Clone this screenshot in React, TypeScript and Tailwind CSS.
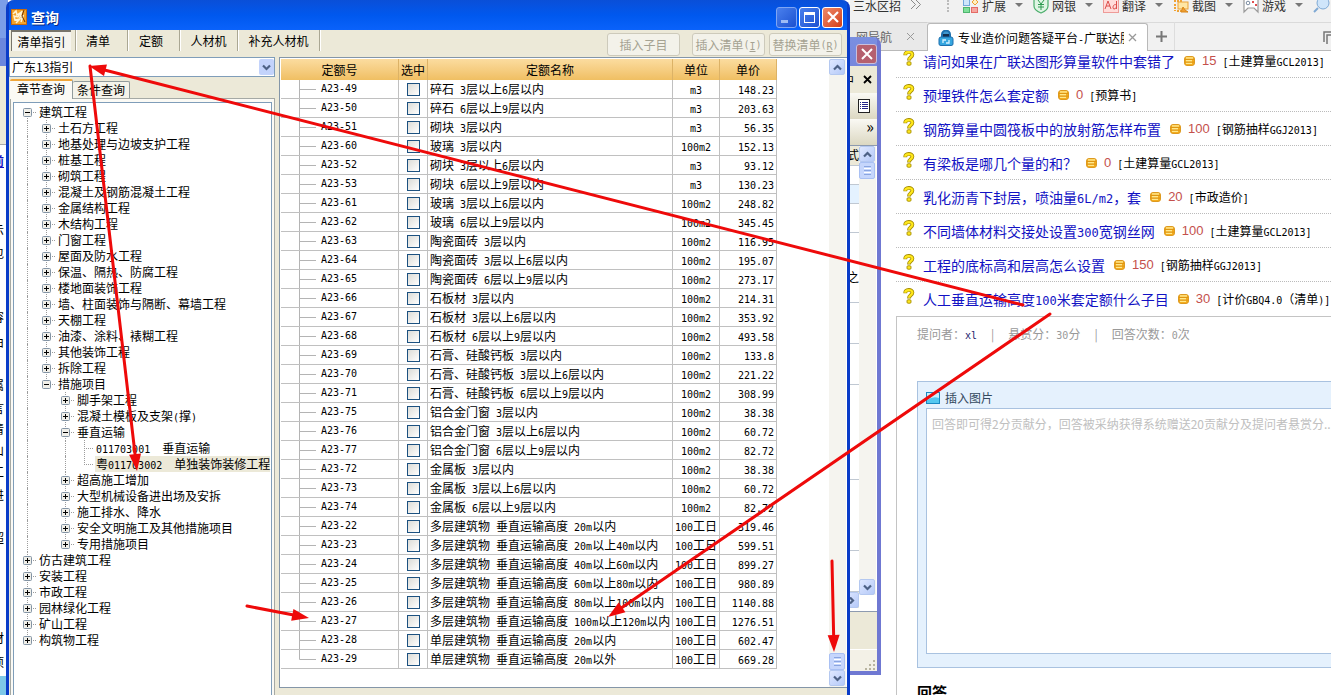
import React from "react";

const QUOTAS: [string, string, string, string][] = [
  ["A23-49", "碎石 3层以上6层以内", "m3", "148.23"],
  ["A23-50", "碎石 6层以上9层以内", "m3", "203.63"],
  ["A23-51", "砌块 3层以内", "m3", "56.35"],
  ["A23-60", "玻璃 3层以内", "100m2", "152.13"],
  ["A23-52", "砌块 3层以上6层以内", "m3", "93.12"],
  ["A23-53", "砌块 6层以上9层以内", "m3", "130.23"],
  ["A23-61", "玻璃 3层以上6层以内", "100m2", "248.82"],
  ["A23-62", "玻璃 6层以上9层以内", "100m2", "345.45"],
  ["A23-63", "陶瓷面砖 3层以内", "100m2", "116.95"],
  ["A23-64", "陶瓷面砖 3层以上6层以内", "100m2", "195.07"],
  ["A23-65", "陶瓷面砖 6层以上9层以内", "100m2", "273.17"],
  ["A23-66", "石板材 3层以内", "100m2", "214.31"],
  ["A23-67", "石板材 3层以上6层以内", "100m2", "353.92"],
  ["A23-68", "石板材 6层以上9层以内", "100m2", "493.58"],
  ["A23-69", "石膏、硅酸钙板 3层以内", "100m2", "133.8"],
  ["A23-70", "石膏、硅酸钙板 3层以上6层以内", "100m2", "221.22"],
  ["A23-71", "石膏、硅酸钙板 6层以上9层以内", "100m2", "308.99"],
  ["A23-75", "铝合金门窗 3层以内", "100m2", "38.38"],
  ["A23-76", "铝合金门窗 3层以上6层以内", "100m2", "60.72"],
  ["A23-77", "铝合金门窗 6层以上9层以内", "100m2", "82.72"],
  ["A23-72", "金属板 3层以内", "100m2", "38.38"],
  ["A23-73", "金属板 3层以上6层以内", "100m2", "60.72"],
  ["A23-74", "金属板 6层以上9层以内", "100m2", "82.72"],
  ["A23-22", "多层建筑物 垂直运输高度 20m以内", "100工日", "319.46"],
  ["A23-23", "多层建筑物 垂直运输高度 20m以上40m以内", "100工日", "599.51"],
  ["A23-24", "多层建筑物 垂直运输高度 40m以上60m以内", "100工日", "899.27"],
  ["A23-25", "多层建筑物 垂直运输高度 60m以上80m以内", "100工日", "980.89"],
  ["A23-26", "多层建筑物 垂直运输高度 80m以上100m以内", "100工日", "1140.88"],
  ["A23-27", "多层建筑物 垂直运输高度 100m以上120m以内", "100工日", "1276.51"],
  ["A23-28", "单层建筑物 垂直运输高度 20m以内", "100工日", "602.47"],
  ["A23-29", "单层建筑物 垂直运输高度 20m以外", "100工日", "669.28"],
];

type Kind = "plus" | "minus" | "leaf";
const TREE: [number, Kind, string][] = [
  [0, "minus", "建筑工程"],
  [1, "plus", "土石方工程"],
  [1, "plus", "地基处理与边坡支护工程"],
  [1, "plus", "桩基工程"],
  [1, "plus", "砌筑工程"],
  [1, "plus", "混凝土及钢筋混凝土工程"],
  [1, "plus", "金属结构工程"],
  [1, "plus", "木结构工程"],
  [1, "plus", "门窗工程"],
  [1, "plus", "屋面及防水工程"],
  [1, "plus", "保温、隔热、防腐工程"],
  [1, "plus", "楼地面装饰工程"],
  [1, "plus", "墙、柱面装饰与隔断、幕墙工程"],
  [1, "plus", "天棚工程"],
  [1, "plus", "油漆、涂料、裱糊工程"],
  [1, "plus", "其他装饰工程"],
  [1, "plus", "拆除工程"],
  [1, "minus", "措施项目"],
  [2, "plus", "脚手架工程"],
  [2, "plus", "混凝土模板及支架(撑)"],
  [2, "minus", "垂直运输"],
  [3, "leaf", "011703001  垂直运输"],
  [3, "leaf", "粤011703002  单独装饰装修工程"],
  [2, "plus", "超高施工增加"],
  [2, "plus", "大型机械设备进出场及安拆"],
  [2, "plus", "施工排水、降水"],
  [2, "plus", "安全文明施工及其他措施项目"],
  [2, "plus", "专用措施项目"],
  [0, "plus", "仿古建筑工程"],
  [0, "plus", "安装工程"],
  [0, "plus", "市政工程"],
  [0, "plus", "园林绿化工程"],
  [0, "plus", "矿山工程"],
  [0, "plus", "构筑物工程"],
];

const QUESTIONS: [string, string, string][] = [
  ["请问如果在广联达图形算量软件中套错了", "15", "[土建算量GCL2013]"],
  ["预埋铁件怎么套定额", "0", "[预算书]"],
  ["钢筋算量中圆筏板中的放射筋怎样布置", "100", "[钢筋抽样GGJ2013]"],
  ["有梁板是哪几个量的和？", "0", "[土建算量GCL2013]"],
  ["乳化沥青下封层，喷油量6L/m2，套", "20", "[市政造价]"],
  ["不同墙体材料交接处设置300宽钢丝网", "100", "[土建算量GCL2013]"],
  ["工程的底标高和层高怎么设置", "150", "[钢筋抽样GGJ2013]"],
  ["人工垂直运输高度100米套定额什么子目", "30", "[计价GBQ4.0（清单)]"],
];

const LEFT_EDGE: [string, string][] = [
  ["示", "top-[221px]"],
  ["包", "top-[244px]"],
  ["容", "top-[308px]"],
  ["由", "top-[333px]"],
  ["属", "top-[376px]"],
  ["言", "top-[399px]"],
  ["清", "top-[420px]"],
  ["山", "top-[441px]"],
  ["工", "top-[463px]"],
  ["进", "top-[486px]"],
  ["超", "top-[529px]"],
  ["材", "top-[629px]"],
  ["项", "top-[653px]"],
];

/* Half-width runs are set in a monospace face so that they take half a Chinese character each. */
function Mix({ s, big = false }: { s: string; big?: boolean }) {
  return (
    <>
      {s.split(/([\x20-\x7e]+)/).map((part, i) =>
        i % 2 ? (
          <span
            key={i}
            className={
              big
                ? "whitespace-pre font-['DejaVu_Sans_Mono',monospace] text-[12px] leading-none"
                : "whitespace-pre font-['DejaVu_Sans_Mono',monospace] text-[10px] leading-none"
            }
          >
            {part}
          </span>
        ) : (
          part
        ),
      )}
    </>
  );
}

function TreeMark({ kind, first, last }: { kind: Kind; first: boolean; last: boolean }) {
  return (
    <svg width="16" height="16" className="block shrink-0" aria-hidden="true">
      <path
        d={`M4.5 ${first ? 8 : 0}V${last ? 8 : 16}M4 8.5H14`}
        stroke="#9c9c9c"
        strokeDasharray="1 1"
        fill="none"
      />
      {kind !== "leaf" && (
        <>
          <rect x="0.5" y="4.5" width="8" height="8" rx="1" fill="#f0efe9" stroke="#8394a5" />
          <path d={kind === "plus" ? "M2 8.5H7M4.5 6V11" : "M2 8.5H7"} stroke="#000" />
        </>
      )}
    </svg>
  );
}

function Chevron({ up = false, right = false }: { up?: boolean; right?: boolean }) {
  const d = right ? "M3 0.5L6 3.5L3 6.5" : up ? "M1 5.5L4.5 2L8 5.5" : "M1 1.5L4.5 5L8 1.5";
  return (
    <svg width="9" height="7" viewBox="0 0 9 7" aria-hidden="true">
      <path d={d} fill="none" stroke="#4d6185" strokeWidth="2.2" />
    </svg>
  );
}

function ScrollButton({ up = false, right = false, label }: { up?: boolean; right?: boolean; label: string }) {
  return (
    <button
      aria-label={label}
      className="flex h-4 w-4 shrink-0 items-center justify-center rounded-[2px] border border-[#b4c8f0] bg-linear-to-br from-[#dfe8ff] to-[#b5c9f8]"
    >
      <Chevron up={up} right={right} />
    </button>
  );
}

function Thumb() {
  return (
    <div className="flex h-[17px] w-4 shrink-0 flex-col items-center justify-center gap-px rounded-[2px] border border-[#a9c0f3] bg-[#c6d6fc]">
      <i className="h-px w-[7px] bg-[#8aa5e0]" />
      <i className="h-px w-[7px] bg-white" />
      <i className="h-px w-[7px] bg-[#8aa5e0]" />
      <i className="h-px w-[7px] bg-white" />
      <i className="h-px w-[7px] bg-[#8aa5e0]" />
    </div>
  );
}

function QuestionMark() {
  return (
    <svg width="12" height="16" viewBox="0 0 12 16" className="mb-1.5 shrink-0" aria-hidden="true">
      <path d="M2.2 5.2C2.2 1 9.4 1 9.4 4.6C9.4 7.2 6 7 6 10.4" fill="none" stroke="#a58c00" strokeWidth="3.8" />
      <path d="M2.2 4.7C2.2 1.2 9.4 1.2 9.4 4.6C9.4 7.2 6 7 6 9.8" fill="none" stroke="#ffe81c" strokeWidth="2.2" />
      <rect x="4" y="11.8" width="4" height="3.4" rx="1" fill="#ffe81c" stroke="#a58c00" strokeWidth="0.9" />
    </svg>
  );
}

function Coins() {
  return (
    <svg width="11" height="10" viewBox="0 0 11 10" className="shrink-0" aria-hidden="true">
      <rect x="0.5" y="0.5" width="10" height="9" rx="2.5" fill="#f5ad1e" stroke="#dd9a20" />
      <path d="M2 2H9M2 4.7H8M2 7.4H8" stroke="#ffe98c" strokeWidth="1.4" />
      <path d="M1 3.4H10M1 6.1H10" stroke="#c27a08" strokeWidth="0.5" />
    </svg>
  );
}

const TOOL_ICONS: Record<string, React.ReactNode> = {
  扩展: (
    <>
      <rect x="0.5" y="-1.5" width="6" height="7" fill="#cfe6fb" stroke="#74a9dc" />
      <path d="M12 -1L15 2L12 5L9 2Z" fill="#fff0c0" stroke="#f0a030" />
      <rect x="0.5" y="7.5" width="6" height="5" fill="#7fe09a" stroke="#4fb56f" />
      <rect x="8.5" y="7.5" width="6" height="5" fill="#f6a6a0" stroke="#e46b66" />
    </>
  ),
  网银: (
    <>
      <path d="M1 0V6C1 9 4 11.5 8 13C12 11.5 15 9 15 6V0" fill="#dff5e4" stroke="#4cae6c" strokeWidth="1.2" />
      <path d="M5 0L8 4L11 0M8 4V10M5 4.5H11M5 7H11" fill="none" stroke="#2e9a50" />
    </>
  ),
  翻译: (
    <>
      <rect x="0.5" y="-2.5" width="15" height="15" fill="#ffdcda" stroke="#ee9b98" />
      <path d="M2 9L5 1L8 9M3 6H7M13.5 1V9M13.500 5C10 3 9 9 11 9C13 9 13.5 7 13.5 6" fill="none" stroke="#dc4f4c" />
    </>
  ),
  截图: (
    <>
      <path d="M1 1H9M2 4V11M4 11H8" stroke="#efa336" strokeWidth="2" strokeDasharray="2 1" />
      <rect x="5" y="2" width="10" height="7" fill="#ffe6a4" stroke="#eba238" />
      <path d="M8 12L10 7L12 10L15 12Z" fill="#f0a030" stroke="#d98518" />
    </>
  ),
  游戏: (
    <>
      <path d="M1 -1H15V12L11 8H5L1 12Z" fill="#fff" stroke="#9a9a9a" strokeWidth="1.2" />
      <circle cx="5" cy="3" r="1.8" fill="none" stroke="#7a8ba0" />
      <path d="M9 2H11M12 5H14" stroke="#e05050" strokeWidth="2" />
    </>
  ),
};

function BrowserPane() {
  return (
    <section className="absolute inset-y-0 left-[850px] right-0 overflow-hidden bg-white">
      <div className="flex h-[23px] items-start border-b border-[#dadada] bg-[#f1f1f1] text-[#333]">
        <span className="w-[60px] shrink-0 pl-[3px] leading-[12px]">三水区招</span>
        <svg width="12" height="11" className="mr-[25px] shrink-0" aria-hidden="true">
          <path d="M1 0L5.5 4.5L1 9M6 0L10.5 4.5L6 9" fill="none" stroke="#8a8a8a" />
        </svg>
        <i className="mr-[14px] h-3 w-0 shrink-0 border-l-2 border-dotted border-[#bbb]" />
        {Object.keys(TOOL_ICONS).map((name) => (
          <button key={name} className="flex w-[70px] shrink-0 items-start leading-[12px]">
            <svg width="16" height="14" className="mr-[3px] shrink-0" aria-hidden="true">
              {TOOL_ICONS[name]}
            </svg>
            {name}
            <svg width="8" height="8" className="ml-[9px] shrink-0" aria-hidden="true">
              <path d="M0 3H8L4 7Z" fill="#777" />
            </svg>
          </button>
        ))}
        <svg width="18" height="14" className="shrink-0" aria-hidden="true">
          <circle cx="10" cy="3" r="6" fill="#cfe5fa" stroke="#7fa9d4" />
          <path d="M5 8L1 12" stroke="#7fa9d4" strokeWidth="2" />
        </svg>
      </div>
      <nav className="flex h-7 items-end border-b border-[#b9b9b9] bg-[#f1f1f1]">
        <div className="flex h-7 w-[77px] items-center justify-end border-t border-[#d0d0d0] bg-[#e9e9e9] pr-3 text-[#666]">
          <span>网导航</span>
          <button aria-label="关闭标签" className="ml-3.5 text-[#999]">
            <svg width="9" height="9" aria-hidden="true"><path d="M1 1L8 8M8 1L1 8" stroke="currentColor" /></svg>
          </button>
        </div>
        <div className="-mb-px flex h-7 w-[221px] items-center rounded-t-[3px] border border-b-0 border-[#b9b9b9] bg-white pl-[10px]">
          <svg width="16" height="16" viewBox="0 0 16 16" className="mr-[4px] shrink-0" aria-hidden="true">
            <path d="M4 7V4.5A4 4 0 0 1 12 4.5V7" fill="#3f97cf" stroke="#1d6fae" strokeWidth="2" />
            <rect x="5" y="4" width="6" height="4" fill="#142f4e" />
            <path d="M1 9Q1 7 3 7H13Q15 7 15 9V14Q15 15.5 13 15.5H3Q1 15.5 1 14Z" fill="#36a6df" stroke="#1d6fae" />
            <path d="M5 13V10H8M8 13H11V10" fill="none" stroke="#d6f1ff" strokeWidth="1.3" />
          </svg>
          <span className="w-[166px] overflow-hidden whitespace-nowrap text-black"><Mix s="专业造价问题答疑平台-广联达服" /></span>
          <button aria-label="关闭标签" className="ml-[4px]">
            <svg width="9" height="9" aria-hidden="true"><path d="M1 1L8 8M8 1L1 8" stroke="#999" strokeWidth="1.3" /></svg>
          </button>
        </div>
        <button aria-label="新建标签" className="flex h-7 w-[27px] items-center justify-center border-r border-[#ddd]">
          <svg width="11" height="11" aria-hidden="true"><path d="M5.5 0V11M0 5.5H11" stroke="#777" strokeWidth="2" /></svg>
        </button>
        <button aria-label="窗口列表" className="-mr-1 mb-1.5 ml-auto">
          <svg width="12" height="13" aria-hidden="true">
            <path d="M1 11V1H12M4 13V4H12" fill="none" stroke="#777" strokeWidth="1.5" />
          </svg>
        </button>
      </nav>
      <div className="overflow-hidden pl-[46px]">
        <ul className="-mt-[7px]">
          {QUESTIONS.map(([title, points, tag], i) => (
            <li
              key={title}
              className={
                i === QUESTIONS.length - 1
                  ? "flex h-[34px] items-center whitespace-nowrap pl-[7px]"
                  : "flex h-[34px] items-center whitespace-nowrap border-b border-dotted border-[#bbb] pl-[7px]"
              }
            >
              <QuestionMark />
              <a href="#" className="ml-2 text-[14px] text-[#1212c4]"><Mix s={title} big /></a>
              <span className="ml-[9px] flex items-center gap-[7px] font-['Liberation_Sans',sans-serif] text-[13px] text-[#c4504c]">
                <Coins />
                {points}
              </span>
              <span className="ml-[6px] text-black"><Mix s={tag} /></span>
            </li>
          ))}
        </ul>
        <div className="border-l border-t border-[#c4c4c4] pl-5">
          <p className="flex h-16 gap-[14px] whitespace-nowrap pt-2 text-[#999]">
            <span>提问者：<a href="#" className="text-[#24246e]"><Mix s="xl" /></a></span>
            <span>|</span>
            <span>悬赏分：<Mix s="30" />分</span>
            <span>|</span>
            <span>回答次数：<Mix s="0" />次</span>
          </p>
          <div className="border border-r-0 border-[#a9c2e0] bg-[#e5f1fd] pb-[13px] pl-2">
            <button className="flex h-[26px] items-center gap-[5px] pt-[6px] text-[#34495e]">
              <svg width="14" height="12" aria-hidden="true">
                <rect x="0.5" y="0.5" width="13" height="11" fill="#55c8f0" stroke="#1a88c2" />
                <path d="M1 1H13V6Q7 4 1 8Z" fill="#c8f1fc" />
              </svg>
              插入图片
            </button>
            <textarea
              aria-label="回答内容"
              placeholder="回答即可得2分贡献分，回答被采纳获得系统赠送20贡献分及提问者悬赏分..."
              className="block h-[246px] w-full resize-none overflow-hidden whitespace-nowrap border border-r-0 border-[#a9c2e0] bg-white px-[5px] py-1.5 text-[12px] placeholder:text-[#c0c0c0] focus:outline-none"
            />
          </div>
          <h2 className="pt-[15px] text-[15px] font-bold text-black">回答</h2>
        </div>
      </div>
    </section>
  );
}

function BackWindow() {
  return (
    <>
      <aside className="absolute inset-y-0 left-0 flex w-2 flex-col overflow-hidden bg-[#7ec8e8] text-black">
        <div className="h-[38px] bg-[#7c9ee8]" />
        <div className="h-7 bg-[#6b87dd]" />
        <div className="h-[78px] bg-[#ece9d8]" />
        <div className="h-[532px] border-t border-[#aaa] bg-white" />
        {LEFT_EDGE.map(([ch, top]) => (
          <span key={top} className={`absolute -left-2 w-3 ${top}`}>{ch}</span>
        ))}
        <b className="absolute -left-2 top-[152px] text-[#1212c4] underline">前</b>
      </aside>
      <section className="absolute left-[700px] top-[37px] flex h-[638px] w-[181px] flex-col rounded-t-lg border-b-4 border-r-4 border-[#6f78d2] bg-white">
        <div className="flex h-[29px] shrink-0 items-center justify-end rounded-tr bg-linear-to-b from-[#7a8fe0] to-[#7787dc] pt-1">
          <button aria-label="关闭" className="flex h-5 w-[21px] items-center justify-center rounded-[3px] border border-[#c9bfdc] bg-[#b5606f]">
            <svg width="12" height="12" aria-hidden="true"><path d="M1 1L11 11M11 1L1 11" stroke="#fff" strokeWidth="2" /></svg>
          </button>
        </div>
        <div className="flex h-[27px] shrink-0 items-center justify-end gap-[9px] bg-[#ece9d8] pr-[5px]">
          <span>中</span>
          <svg width="9" height="9" aria-hidden="true"><path d="M1 1L8 8M8 1L1 8" stroke="#000" strokeWidth="1.8" /></svg>
        </div>
        <div className="flex h-[26px] shrink-0 items-center justify-end bg-linear-to-b from-[#faf9f4] to-[#dcd8c2] pr-[7px]">
          <svg width="12" height="14" aria-hidden="true">
            <rect x="0.5" y="0.5" width="11" height="13" fill="#fff" stroke="#222" />
            <path d="M2 3.5H3M4 3.5H10M2 5.5H3M4 5.5H10M2 7.5H3M4 7.5H10M2 9.5H3M4 9.5H10" stroke="#22228a" />
          </svg>
        </div>
        <div className="flex h-[26px] shrink-0 justify-end bg-linear-to-b from-[#faf9f4] to-[#dcd8c2] pr-[3px] text-[16px] leading-[14px]">»</div>
        <div className="flex flex-1 justify-end border-b border-t border-[#8d9ab0] pr-px">
          <div className="w-20 text-right">
            <div className="h-5 border-b border-[#c0c8d2] bg-[#ece9d8] leading-[18px]">式</div>
            <div className="h-[19px] border-b border-[#c0c8d2]" />
            <div className="h-[19px] border-b border-[#c0c8d2] bg-[#e4f2ff]" />
            <div className="h-[29px] border-b border-[#c0c8d2]" />
            <div className="flex h-[70px] items-end justify-end border-b border-[#c0c8d2] pb-4">之</div>
            <div className="h-[41px] border-b border-[#c0c8d2]" />
            <div className="h-[41px] border-b border-[#c0c8d2]" />
            <div className="h-[95px] border-b border-[#c0c8d2]" />
            <div className="h-[71px] border-b border-[#c0c8d2]" />
            <div className="h-[41px] border-b border-[#c0c8d2]" />
            <div className="flex justify-end bg-[#ece9d8]">
              <ScrollButton right label="向右" />
            </div>
          </div>
          <div className="mb-4 flex w-[17px] flex-col bg-[#f5f4ef]">
            <ScrollButton up label="向上" />
            <Thumb />
            <div className="flex-1" />
            <ScrollButton label="向下" />
          </div>
        </div>
        <div className="h-[38px] shrink-0 border-b border-white bg-[#ece9d8]" />
        <div className="flex h-[21px] shrink-0 items-end justify-end bg-[#f3f1e7]">
          <svg width="12" height="12" aria-hidden="true">
            <path d="M9 1V11M5 5V11M1 9V11" stroke="#b8b4a0" strokeWidth="2" strokeDasharray="2 2" />
          </svg>
        </div>
      </section>
    </>
  );
}

function TitleBar() {
  return (
    <header className="flex h-[30px] shrink-0 items-center rounded-t-[5px] bg-linear-to-b from-[#0a4fd8] via-[#0058ee] to-[#0a62fb] pl-0.5 pr-1 pt-1">
      <svg width="16" height="16" viewBox="0 0 16 16" className="shrink-0" aria-hidden="true">
        <rect width="16" height="16" fill="#c76a10" />
        <rect x="1" y="1" width="14" height="14" fill="#f3a229" />
        <path d="M2 5L5 2L6 6L9 4L7 8L3 7L4 11L9 10L5 14M11 2L9 8L12 7L10 13" fill="none" stroke="#fff3d4" strokeWidth="1.5" />
        <path d="M13 1L11 7L14 13" fill="none" stroke="#6e3305" />
      </svg>
      <h1 className="ml-1 text-[14px] font-bold text-white [text-shadow:1px_1px_0_#0a2a80]">查询</h1>
      <div className="ml-auto flex gap-[2px]">
        <button aria-label="最小化" className="flex h-[21px] w-[21px] items-end rounded-[3px] border border-[#7fa5f3] bg-linear-to-br from-[#4a80ee] to-[#1c50d0] pb-1 pl-1">
          <i className="h-[3px] w-[7px] bg-[#9dbcf5]" />
        </button>
        <button aria-label="最大化" className="flex h-[21px] w-[21px] items-center justify-center rounded-[3px] border border-white bg-linear-to-br from-[#4a80ee] to-[#1c50d0]">
          <i className="h-[11px] w-[11px] border border-t-[3px] border-white" />
        </button>
        <button aria-label="关闭" className="flex h-[21px] w-[21px] items-center justify-center rounded-[3px] border border-white bg-linear-to-br from-[#ee8868] to-[#d23c10]">
          <svg width="12" height="12" aria-hidden="true"><path d="M1 1L11 11M11 1L1 11" stroke="#fff" strokeWidth="2.2" /></svg>
        </button>
      </div>
    </header>
  );
}

const ACTION = "flex h-[23px] w-[73px] items-center justify-center rounded-[3px] border border-[#cdcabb] bg-[#f3f2ea] text-[#a5a292]";
const TAB = "h-[21px] border-r border-[#aaa793] shadow-[1px_0_0_#fff]";

function Toolbar() {
  return (
    <div className="flex h-[27px] shrink-0 items-start whitespace-nowrap text-black">
      <div className="flex w-[67px] justify-start border-r border-[#aaa793] pl-[2px] shadow-[1px_0_0_#fff]">
        <button className="h-[21px] w-[60px] border-l border-t-2 border-[#77746a] bg-[#f5f4ee]">清单指引</button>
      </div>
      <button className={`${TAB} w-[52px] pr-[7px]`}>清单</button>
      <button className={`${TAB} w-[52px] pr-[5px]`}>定额</button>
      <button className={`${TAB} w-[58px]`}>人材机</button>
      <button className={`${TAB} w-[82px]`}>补充人材机</button>
      <div className="ml-auto flex pr-[5px] pt-[3px]">
        <button disabled className={`${ACTION} mr-3`}>插入子目</button>
        <button disabled className={`${ACTION} mr-1`}>插入清单<Mix s="(" /><u><Mix s="I" /></u><Mix s=")" /></button>
        <button disabled className={ACTION}>替换清单<Mix s="(" /><u><Mix s="R" /></u><Mix s=")" /></button>
      </div>
    </div>
  );
}

function ChapterPanel() {
  return (
    <div className="flex w-[266px] shrink-0 flex-col">
      <div className="relative h-5 shrink-0">
        <select aria-label="指引" className="h-5 w-full appearance-none border border-[#7f9db9] bg-white pl-[2px] text-[12px] text-black">
          <option>广东13指引</option>
        </select>
        <span className="pointer-events-none absolute right-px top-0.5 flex h-4 w-[15px] items-center justify-center rounded-[2px] bg-[#c3d3fb]">
          <Chevron />
        </span>
      </div>
      <div className="flex h-[21px] shrink-0 items-end pl-px text-black">
        <button className="relative -mb-px h-5 w-[63px] rounded-t-[2px] border-r border-t-2 border-r-[#919b9c] border-t-[#f0a63a] bg-[#fbfaf5] pb-[3px] leading-[14px]">章节查询</button>
        <button className="h-[17px] w-[57px] rounded-t-[2px] border border-b-0 border-l-0 border-[#919b9c] bg-[#f4f3ea] leading-[16px]">条件查询</button>
      </div>
      <div className="ml-px flex-1 border border-b-0 border-[#a5a9a5] bg-[#fbfaf5] px-0.5 pt-[3px]">
        <ul className="h-full overflow-hidden border border-b-0 border-[#7f9db9] bg-white pt-px text-black">
          {TREE.map(([level, kind, name], i) => (
            <li key={name} className="flex h-4 items-center whitespace-nowrap pl-[9px] leading-4">
              {level > 0 && <i className="ml-[4px] h-4 w-[15px] shrink-0 border-l border-dotted border-[#9c9c9c]" />}
              {level > 1 && <i className="h-4 w-[19px] shrink-0" />}
              {level > 2 && <i className="ml-[4px] h-4 w-[15px] shrink-0 border-l border-dotted border-[#9c9c9c]" />}
              <TreeMark
                kind={kind}
                first={i === 0}
                last={name === "措施项目" || name === "专用措施项目" || name === "构筑物工程" || i === 22}
              />
              <span className={i === 22 ? "-ml-px bg-[#ece9d8] pl-px" : ""}><Mix s={name} /></span>
            </li>
          ))}
        </ul>
      </div>
    </div>
  );
}

const TH = "h-[21px] border-r border-[#dcb266] p-0 text-center font-normal";
const TD = "h-[19px] border-b border-r border-[#c0c0c0] p-0 leading-[14px]";

function QuotaGrid() {
  return (
    <div className="mb-[7px] ml-1 flex flex-1 overflow-hidden border border-r-0 border-[#8496a8] bg-white pl-px pt-px">
      <div className="flex-1">
        <table className="w-[496px] table-fixed border-separate border-spacing-0 whitespace-nowrap text-black">
          <colgroup>
            <col className="w-[118px]" />
            <col className="w-[29px]" />
            <col className="w-[245px]" />
            <col className="w-[47px]" />
            <col className="w-[57px]" />
          </colgroup>
          <thead className="bg-linear-to-b from-[#fbdc9f] to-[#f0bf62]">
            <tr>
              <th className={TH}>定额号</th>
              <th className={TH}>选中</th>
              <th className={TH}>定额名称</th>
              <th className={TH}>单位</th>
              <th className={TH}>单价</th>
            </tr>
          </thead>
          <tbody>
            {QUOTAS.map(([code, name, unit, price], i) => (
              <tr key={code}>
                <td className={TD}>
                  <div className="flex h-[18px] items-center">
                    <svg width="40" height="18" className="shrink-0" aria-hidden="true">
                      <path d={i === QUOTAS.length - 1 ? "M18.5 0V9.5H35" : "M18.5 0V18M18 9.5H35"} fill="none" stroke="#b4b4b4" />
                    </svg>
                    <Mix s={code} />
                  </div>
                </td>
                <td className={TD}>
                  <input
                    type="checkbox"
                    aria-label={code}
                    className="mx-auto block h-[13px] w-[13px] appearance-none border border-[#1c5180] bg-linear-to-br from-[#dcdcd7] to-white"
                  />
                </td>
                <td className={`${TD} pl-0.5`}><Mix s={name} /></td>
                <td className={`${TD} text-center`}><Mix s={unit} /></td>
                <td className={`${TD} pr-0.5 text-right`}><Mix s={price} /></td>
              </tr>
            ))}
          </tbody>
        </table>
      </div>
      <div className="mr-px flex w-[17px] flex-col bg-[#f5f4ef] pb-px">
        <ScrollButton up label="向上滚动" />
        <div className="flex-1" />
        <Thumb />
        <ScrollButton label="向下滚动" />
      </div>
    </div>
  );
}

const ARROWS: [number, number, number, number][] = [
  [1023, 305, 89, 66],
  [90, 66, 137, 471],
  [1050, 314, 608, 617],
  [247, 606, 309, 618],
  [832, 561, 834, 652],
];

function Arrows() {
  return (
    <svg className="pointer-events-none absolute inset-0 h-full w-full" aria-hidden="true">
      {ARROWS.map(([x1, y1, x2, y2], i) => {
        const len = Math.hypot(x2 - x1, y2 - y1);
        const ux = (x2 - x1) / len;
        const uy = (y2 - y1) / len;
        const bx = x2 - ux * 17;
        const by = y2 - uy * 17;
        return (
          <g key={i}>
            <line x1={x1} y1={y1} x2={bx} y2={by} stroke="#ee0a0a" strokeWidth="3" strokeLinecap="round" />
            <polygon
              points={`${x2},${y2} ${bx - uy * 6},${by + ux * 6} ${bx + uy * 6},${by - ux * 6}`}
              fill="#ee0a0a"
            />
          </g>
        );
      })}
    </svg>
  );
}

export default function App() {
  return (
    <main className="relative h-screen overflow-hidden bg-white font-['Noto_Sans_CJK_SC',sans-serif] text-[12px] leading-[18px]">
      <BrowserPane />
      <BackWindow />
      <section className="absolute inset-y-0 left-[6px] flex w-[844px] flex-col rounded-t-lg border-x-[3px] border-[#0a3cc8] bg-[#ece9d8]">
        <TitleBar />
        <Toolbar />
        <div className="flex min-h-0 flex-1">
          <ChapterPanel />
          <QuotaGrid />
        </div>
      </section>
      <Arrows />
    </main>
  );
}
